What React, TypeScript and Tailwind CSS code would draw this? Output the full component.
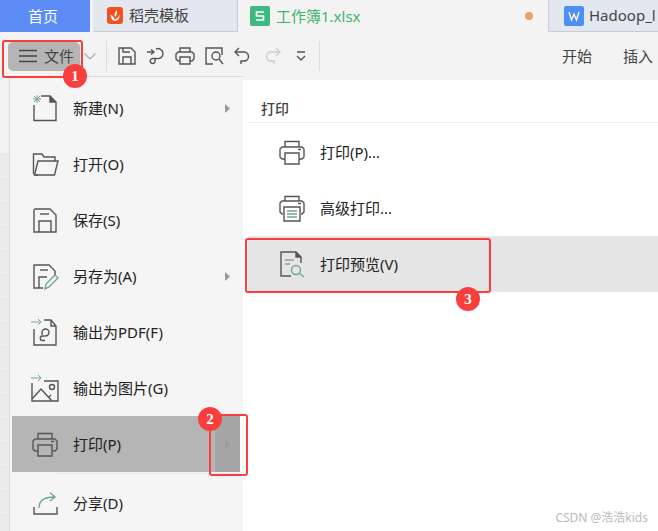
import type { ReactNode } from 'react';

const GREEN = '#6fa98a';
const GRAY = '#555';

function Icon({ size = 28, children }: { size?: number; children: ReactNode }) {
  return (
    <svg width={size} height={size} viewBox="0 0 28 28" fill="none" stroke={GRAY} strokeWidth={1.4} className="shrink-0">
      {children}
    </svg>
  );
}

const NewIcon = () => (
  <Icon>
    <path d="M10 2H19L25 8V26.5H3V11" />
    <path d="M19 2V8H25" fill="#555" />
    <path d="M6 1V9M2 5H10M3 2L9 8M9 2L3 8" stroke={GREEN} strokeWidth={1} />
  </Icon>
);

const OpenIcon = () => (
  <Icon>
    <path d="M7 25H4.5L2.5 23.5V4H11L13 7H24V11" />
    <path d="M7 11H27L23.5 25H3.5Z" />
  </Icon>
);

const SaveIcon = () => (
  <Icon>
    <path d="M4 3H19L25 9V26H3V4Z" />
    <path d="M9 8H18" />
    <path d="M8 26V15H20V26" />
  </Icon>
);

const SaveAsIcon = () => (
  <Icon>
    <path d="M12 26H3V3H18L24 9V13" />
    <path d="M9 8H17" />
    <path d="M8 26V15H16" />
    <path d="M14 27L15 22L24 13L27 16L18 25Z" stroke={GREEN} />
  </Icon>
);

const PdfIcon = () => (
  <Icon>
    <path d="M0 4H10M7 1L10 4L7 7" stroke={GREEN} strokeWidth={1} />
    <path d="M3 11V27H25V8L20 2H13" />
    <path d="M20 2V8H25" />
    <path d="M11 17V14.5A3.5 3.5 0 1 1 14.5 18H11.5A2.2 2.2 0 1 0 11.5 22.5H14" />
  </Icon>
);

const ImageIcon = () => (
  <Icon>
    <path d="M0 4H10M7 1L10 4L7 7" stroke={GREEN} strokeWidth={1} />
    <path d="M13 7H27V27H1V9" />
    <path d="M1 25L10 15L21 27M18 23L20 21" />
    <circle cx="21" cy="13" r="2.5" />
  </Icon>
);

const PrinterIcon = ({ size = 28 }: { size?: number }) => (
  <Icon size={size}>
    <path d="M7 9V3.5H21V9" />
    <path d="M7 21H4L2 19V11L4 9H24L26 11V19L24 21H21" />
    <path d="M7 15H21V26H7Z" />
    <path d="M20 11.5H23" />
  </Icon>
);

const AdvPrintIcon = () => (
  <Icon>
    <path d="M7 7V2.5H21V7" />
    <path d="M5 20H4L2 18V9L4 7H24L26 9V18L24 20H23" />
    <path d="M6 13H22V27H6Z" />
    <path d="M9 17H19M9 20H19M9 23H19" stroke={GREEN} />
    <path d="M20 9.5H23" />
  </Icon>
);

const ShareIcon = () => (
  <Icon>
    <path d="M3 18V25H26V18" />
    <path d="M8 19C8 12 13 8 23 8M19 3.5L24 8L19 12" stroke={GREEN} />
  </Icon>
);

const PreviewIcon = () => (
  <Icon>
    <path d="M13 26H3V2H18L23 7V13" />
    <path d="M18 2V7H23" fill="#555" />
    <path d="M7 10H16M7 14H12" stroke="#999" />
    <circle cx="18" cy="20" r="4.5" stroke={GREEN} />
    <path d="M21.5 23.5L26 27" stroke={GREEN} />
  </Icon>
);

function Arrow() {
  return (
    <svg width="5" height="9" viewBox="0 0 5 9">
      <path d="M0 0L5 4.5L0 9Z" fill="#999" />
    </svg>
  );
}

function ToolIcon({ children }: { children: ReactNode }) {
  return (
    <svg width="20" height="20" viewBox="0 0 20 20" fill="none" stroke={GRAY} strokeWidth={1.4} className="shrink-0">
      {children}
    </svg>
  );
}

function MenuRow({ icon, label, arrow, active }: { icon: ReactNode; label: string; arrow?: boolean; active?: boolean }) {
  return (
    <div className={`ml-[2px] flex h-[56px] w-[231px] items-center border-r-[3px] ${active ? 'border-white bg-[#b5b5b5]' : 'border-transparent'}`}>
      <div className="flex flex-1 items-center gap-[14px] pl-[19px]">
        {icon}
        <span>{label}</span>
      </div>
      <div className={`flex h-full w-[25px] items-center justify-center ${active ? 'bg-[#a6a6a6]' : ''}`}>
        {arrow && <Arrow />}
      </div>
    </div>
  );
}

function PanelRow({ icon, label, active }: { icon: ReactNode; label: string; active?: boolean }) {
  return (
    <div className={`flex h-[56px] items-center gap-[14px] pl-[30px] ${active ? 'bg-[#e5e5e5]' : ''}`}>
      {icon}
      <span>{label}</span>
    </div>
  );
}

function Badge({ n, className }: { n: number; className: string }) {
  return (
    <div
      className={`absolute flex h-[24px] w-[24px] items-center justify-center rounded-full bg-[#f93e3e] font-['Liberation_Serif',serif] text-[15px] font-bold text-white ${className}`}
    >
      {n}
    </div>
  );
}

export default function App() {
  return (
    <div className="relative h-[531px] w-[658px] overflow-hidden bg-white font-['Noto_Sans','Noto_Sans_CJK_SC',sans-serif] text-[15px] leading-none text-[#333]">
      {/* tabs */}
      <div className="flex h-[32px] bg-[#f3f3f3]">
        <div className="flex w-[90px] items-center justify-center bg-[#5b8cf6] pr-[4px] text-white">首页</div>
        <div className="ml-[3px] flex w-[145px] items-center gap-[6px] border-r border-b border-[#c8ccd8] bg-[#e3e7f0] pl-[14px] text-[#444]">
          <svg width="16" height="17" viewBox="0 0 16 17" className="shrink-0">
            <rect width="16" height="17" rx="3" fill="#f4511e" />
            <path d="M9.5 3C11 6 9.5 8 8 10C7 8 8 5 9.5 3ZM3.5 7.5C5 8 7 10 7.5 12.5C10 12 11.5 10 12.5 7.5C13 11 11 14 8 14C5.5 14 3.5 11 3.5 7.5Z" fill="#fff" />
          </svg>
          <span>稻壳模板</span>
        </div>
        <div className="flex flex-1 items-center pl-[12px]">
          <svg width="20" height="20" viewBox="0 0 20 20" className="shrink-0">
            <rect width="20" height="20" rx="2" fill="#3fb984" />
            <path d="M14 6H6.5V10H13.5V14H6" fill="none" stroke="#fff" strokeWidth={1.6} />
          </svg>
          <span className="ml-[6px] text-[#3fb36b]">工作簿1.xlsx</span>
          <div className="mr-[15px] ml-auto h-[8px] w-[8px] rounded-full bg-[#e8a25f]" />
        </div>
        <div className="flex w-[110px] items-center gap-[5px] border-b border-l border-[#c8ccd8] bg-[#e3e7f0] pl-[15px] text-[#444]">
          <svg width="20" height="20" viewBox="0 0 20 20" className="shrink-0">
            <rect width="20" height="20" rx="2" fill="#4e8ff5" />
            <path d="M5 6L7.5 14L10 8L12.5 14L15 6" fill="none" stroke="#fff" strokeWidth={1.4} />
          </svg>
          <span className="whitespace-nowrap">Hadoop_l</span>
        </div>
      </div>

      {/* toolbar */}
      <div className="flex h-[48px] items-center bg-[#f3f3f3]">
        <div className="ml-[8px] flex h-[29px] w-[72px] items-center gap-[7px] rounded-[5px] bg-[#b5b5b5] pl-[11px] text-[15px] text-[#444]">
          <svg width="18" height="14" viewBox="0 0 18 14" fill="none" stroke="#444" strokeWidth={1.3} className="shrink-0">
            <path d="M0 1.5H18M0 7H18M0 12.5H18" />
          </svg>
          <span>文件</span>
        </div>
        <svg width="12" height="7" viewBox="0 0 12 7" fill="none" stroke="#aaa" strokeWidth={1.2} className="ml-[4px]">
          <path d="M0.5 0.5L6 6L11.5 0.5" />
        </svg>
        <div className="mr-[10px] ml-[10px] h-[30px] w-px bg-[#ddd]" />
        <div className="flex items-center gap-[9px]">
          <ToolIcon>
            <path d="M2 2H14L18 6V18H2Z" />
            <path d="M6 2V6H13M6 18V11H14V18" />
          </ToolIcon>
          <ToolIcon>
            <path d="M1 6H7M5 3.5L8 6L5 8.5" stroke="#555" />
            <path d="M10 3A5 5 0 1 1 11 12.5H7A2.5 2.5 0 1 0 9 16V13" />
          </ToolIcon>
          <ToolIcon>
            <path d="M5 6V2H15V6M5 15H3L1 13V8L3 6H17L19 8V13L17 15H15" />
            <path d="M5 11H15V18H5Z" />
          </ToolIcon>
          <ToolIcon>
            <path d="M9 18H2V2H18V9" />
            <circle cx="12" cy="10" r="4" />
            <path d="M15 13L19 18" />
          </ToolIcon>
          <ToolIcon>
            <path d="M6 2L2 6L6 10" />
            <path d="M2 6H11A4.5 4.5 0 0 1 11 15H8V18" />
          </ToolIcon>
          <ToolIcon>
            <path d="M14 2L18 6L14 10" stroke="#ccc" />
            <path d="M18 6H9A4.5 4.5 0 0 0 9 15H12V18" stroke="#ccc" />
          </ToolIcon>
          <ToolIcon>
            <path d="M6 6H14M6 10L10 14L14 10" />
          </ToolIcon>
        </div>
        <div className="ml-[8px] h-[30px] w-px bg-[#ddd]" />
        <div className="ml-auto flex gap-[31px] pr-[5px] text-[#444]">
          <span>开始</span>
          <span>插入</span>
        </div>
      </div>

      {/* body */}
      <div className="flex h-[451px]">
        <div className="flex w-[9px] flex-col">
          <div className="h-[73px] bg-[#f3f3f3]" />
          <div className="flex-1 bg-[repeating-linear-gradient(to_bottom,#ebebeb_0,#ebebeb_23px,#f0f0f0_23px,#f0f0f0_24px)]" />
        </div>
        <div className="relative -mt-[4px] w-[234px] border-t border-l border-[#dcdcdc] bg-[#f5f5f5] pt-[3px] text-[#222]">
          <MenuRow icon={<NewIcon />} label="新建(N)" arrow />
          <MenuRow icon={<OpenIcon />} label="打开(O)" />
          <MenuRow icon={<SaveIcon />} label="保存(S)" />
          <MenuRow icon={<SaveAsIcon />} label="另存为(A)" arrow />
          <MenuRow icon={<PdfIcon />} label="输出为PDF(F)" />
          <MenuRow icon={<ImageIcon />} label="输出为图片(G)" />
          <MenuRow icon={<PrinterIcon />} label="打印(P)" arrow active />
          <div className="mt-px mr-[3px] ml-[46px] h-px bg-[#e8e8e8]" />
          <div className="mt-px">
            <MenuRow icon={<ShareIcon />} label="分享(D)" />
          </div>
        </div>
        <div className="ml-[5px] flex-1 text-[#222]">
          <div className="flex h-[43px] items-end border-b border-[#eee] pb-[6px] pl-[13px] text-[14px] font-medium text-[#444]">打印</div>
          <div className="pt-px">
            <PanelRow icon={<PrinterIcon />} label="打印(P)..." />
            <PanelRow icon={<AdvPrintIcon />} label="高级打印..." />
            <PanelRow icon={<PreviewIcon />} label="打印预览(V)" active />
          </div>
        </div>
      </div>

      {/* annotations */}
      <div className="absolute top-[40px] left-[2px] h-[38px] w-[81px] rounded-[3px] border-2 border-[#f93e3e]" />
      <div className="absolute top-[414px] left-[209px] h-[62px] w-[39px] rounded-[3px] border-2 border-[#f93e3e]" />
      <div className="absolute top-[238px] left-[245px] h-[55px] w-[246px] rounded-[3px] border-2 border-[#f93e3e]" />
      <Badge n={1} className="top-[64px] left-[63px]" />
      <Badge n={2} className="top-[407px] left-[198px]" />
      <Badge n={3} className="top-[287px] left-[456px]" />

      <div className="absolute top-[512px] right-[10px] text-[12px] text-[#bbb]">CSDN @浩浩kids</div>
    </div>
  );
}
